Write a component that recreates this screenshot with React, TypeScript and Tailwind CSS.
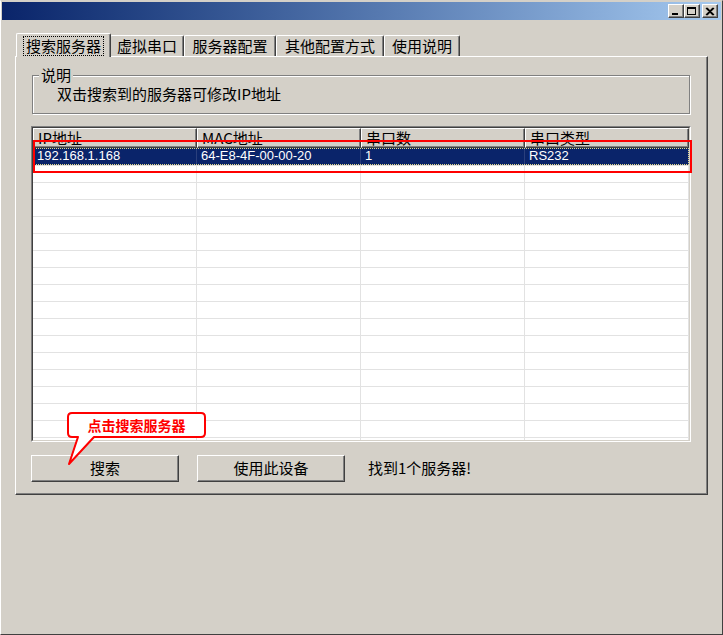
import React from 'react'

const FONT = { fontFamily: '"Noto Sans CJK SC", "Liberation Sans", sans-serif' }
const LATIN = { fontFamily: '"Liberation Sans", "Noto Sans CJK SC", sans-serif' }

const tabs = [
  { label: '搜索服务器', w: 'w-[95px]', active: true },
  { label: '虚拟串口', w: 'w-[74px]' },
  { label: '服务器配置', w: 'w-[92px]' },
  { label: '其他配置方式', w: 'w-[108px]' },
  { label: '使用说明', w: 'w-[76px]' },
]

const columns = ['IP地址', 'MAC地址', '串口数', '串口类型']
const selected = ['192.168.1.168', '64-E8-4F-00-00-20', '1', 'RS232']

const RAISED = 'border-t border-l border-t-white border-l-white border-r border-b border-r-[#404040] border-b-[#404040] shadow-[inset_-1px_-1px_0_#808080]'

const CaptionButton = ({ kind }: { kind: 'min' | 'max' | 'close' }) => (
  <div className={`w-[16px] h-[14px] bg-[#d4d0c8] flex items-center justify-center ${RAISED}`}>
    <svg width="10" height="9" viewBox="0 0 10 9">
      {kind === 'min' && <rect x="1" y="6" width="6" height="2" fill="#000" />}
      {kind === 'max' && (
        <>
          <rect x="0.5" y="0.5" width="8" height="7" fill="none" stroke="#000" />
          <rect x="0" y="0" width="9" height="2" fill="#000" />
        </>
      )}
      {kind === 'close' && (
        <path d="M1 1 L8 8 M2 1 L9 8 M8 1 L1 8 M9 1 L2 8" stroke="#000" strokeWidth="1.2" />
      )}
    </svg>
  </div>
)

export default function App() {
  return (
    <div className="relative w-[723px] h-[635px] bg-[#d4d0c8] border-t border-l border-t-[#d4d0c8] border-l-white border-r border-b border-r-[#404040] border-b-[#404040] overflow-hidden" style={FONT}>
      {/* title bar */}
      <div className="mx-px mt-px h-[18px] bg-gradient-to-r from-[#0a246a] to-[#a6caf0] flex items-center justify-end pr-[3px]">
        <div className="flex items-center">
          <CaptionButton kind="min" />
          <CaptionButton kind="max" />
          <div className="w-[2px]" />
          <CaptionButton kind="close" />
        </div>
      </div>

      {/* tabs */}
      <div className="mt-[13px] pl-[15px] h-[23px] flex items-end">
        {tabs.map((t) => (
          <div
            key={t.label}
            className={`${t.w} ${t.active ? 'h-[24px] -mb-px relative z-10 -mr-[1px]' : 'h-[21px]'} bg-[#d4d0c8] border-t border-l border-t-white border-l-white border-r border-r-[#404040] shadow-[inset_-1px_0_0_#808080] rounded-t-[2px] flex items-center justify-center text-[15px] text-black`}
          >
            <span className={t.active ? 'outline outline-1 outline-dotted outline-[#000] px-[2px] leading-[18px]' : 'leading-[18px]'}>{t.label}</span>
          </div>
        ))}
      </div>

      {/* tab panel */}
      <div className={`ml-[14px] w-[693px] h-[439px] ${RAISED} pl-[15px] pt-[10px]`}>
        <fieldset className="ml-px w-[658px] h-[47px] border border-[#808080] shadow-[1px_1px_0_#fff,inset_1px_1px_0_#fff]">
          <legend className="ml-[6px] px-[2px] bg-[#d4d0c8] text-[15px] leading-[16px] text-black">说明</legend>
          <div className="pl-[24px] text-[15px] leading-[18px] text-black mt-[2px]">双击搜索到的服务器可修改IP地址</div>
        </fieldset>

        {/* list view */}
        <div className="mt-[12px] w-[660px] h-[316px] border-t border-l border-t-[#808080] border-l-[#808080] border-r border-b border-r-white border-b-white">
          <div className="w-full h-full border-t border-l border-t-[#404040] border-l-[#404040] border-r border-b border-r-[#d4d0c8] border-b-[#d4d0c8] bg-white overflow-hidden">
            <div className="flex h-[20px]">
              {columns.map((c) => (
                <div key={c} className={`w-[164px] h-[20px] bg-[#d4d0c8] ${RAISED} overflow-hidden pl-[4px] text-[15px] text-black`}>
                  <div className="leading-[17px]">{c}</div>
                </div>
              ))}
            </div>
            <div className="flex h-[17px] bg-[#0a246a] text-white text-[13px] outline outline-1 outline-dotted outline-[#e6dc8c] -outline-offset-1" style={LATIN}>
              {selected.map((v, i) => (
                <div key={i} className="w-[164px] pl-[4px] leading-[16px] border-r border-r-[#2a3f7c]">{v}</div>
              ))}
            </div>
            {Array.from({ length: 17 }).map((_, r) => (
              <div key={r} className="flex h-[17px] border-t border-t-[#e2e2e2]">
                {columns.map((c) => (
                  <div key={c} className="w-[164px] border-r border-r-[#e2e2e2]" />
                ))}
              </div>
            ))}
          </div>
        </div>

        {/* buttons */}
        <div className="mt-[13px] flex items-center">
          <button className={`w-[148px] h-[27px] bg-[#d4d0c8] ${RAISED} text-[15px] text-black`}>搜索</button>
          <button className={`ml-[18px] w-[148px] h-[27px] bg-[#d4d0c8] ${RAISED} text-[15px] text-black`}>使用此设备</button>
          <span className="ml-[23px] text-[15px] text-black">找到1个服务器!</span>
        </div>
      </div>

      {/* red highlight box */}
      <div className="absolute left-[32px] top-[139px] w-[659px] h-[33px] border-2 border-[#ff0000]" />

      {/* callout */}
      <div className="absolute left-[64px] top-[410px] w-[145px] h-[56px]">
        <svg width="145" height="56" viewBox="0 0 145 56" className="absolute inset-0">
          <path
            d="M7 2 H136 Q140 2 140 6 V22 Q140 26 136 26 H29 L4 53 L13 26 H7 Q3 26 3 22 V6 Q3 2 7 2 Z"
            fill="#fff"
            stroke="#ff0000"
            strokeWidth="2"
            strokeLinejoin="round"
          />
        </svg>
        <div className="absolute left-[3px] top-[2px] w-[137px] h-[24px] flex items-center justify-center text-[14px] font-bold text-[#ff0000]">
          点击搜索服务器
        </div>
      </div>
    </div>
  )
}
